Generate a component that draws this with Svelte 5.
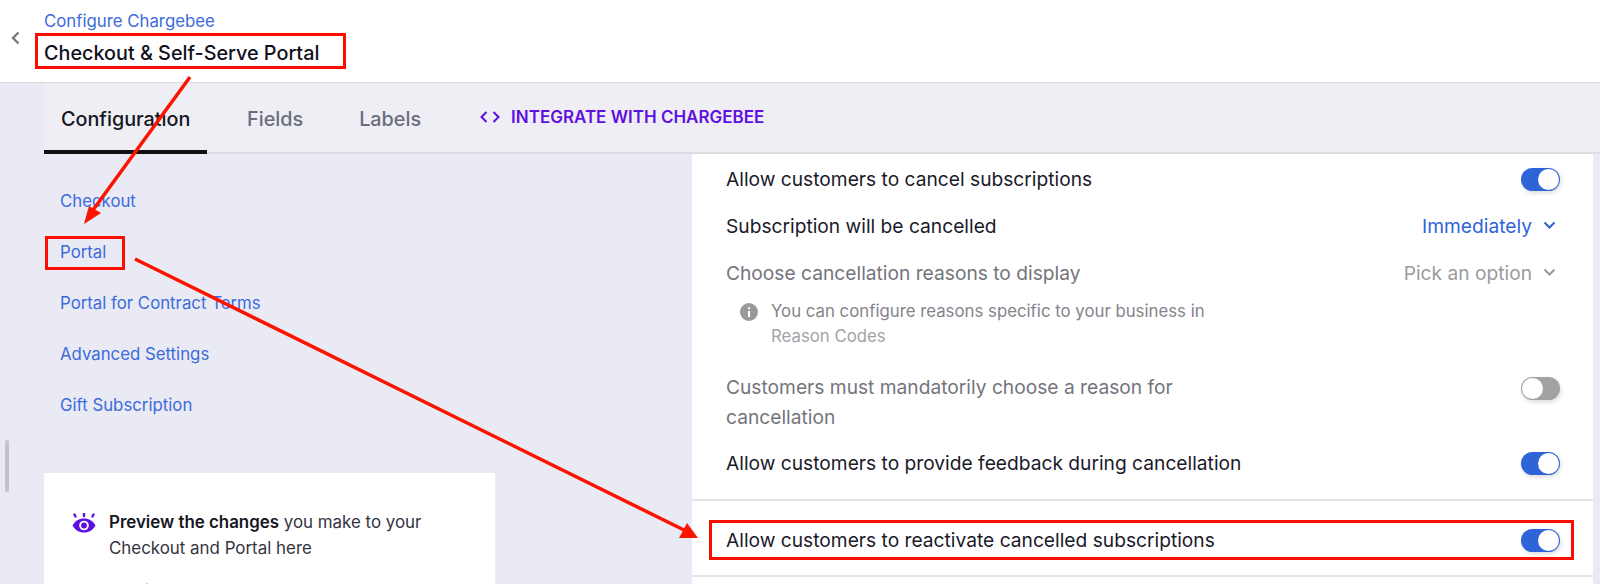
<script lang="ts">
    type Nav = { label: string };

    const links: Nav[] = [
        { label: "Checkout" },
        { label: "Portal" },
        { label: "Portal for Contract Terms" },
        { label: "Advanced Settings" },
        { label: "Gift Subscription" }
    ];
</script>

<div class="page">
    <header class="topbar">
        <button class="back" aria-label="Back">
            <svg width="12" height="16" viewBox="0 0 12 16"><path d="M9.500 2.500 4 8l5.500 5.500" fill="none" stroke="#777a84" stroke-width="2.400" /></svg>
        </button>
        <div class="titles">
            <a class="crumb" href="#top">Configure Chargebee</a>
            <h1>Checkout &amp; Self-Serve Portal</h1>
        </div>
    </header>

    <div class="body">
        <div class="rail"><span class="scroll"></span></div>
        <div class="content">
            <nav class="tabs">
                <span class="tab active">Configuration</span>
                <span class="tab">Fields</span>
                <span class="tab">Labels</span>
                <a class="integrate" href="#top">
                    <svg width="20" height="14" viewBox="0 0 20 14"><path d="M6.500 2 1.500 7l5 5M13.500 2l5 5-5 5" fill="none" stroke="#5f10e0" stroke-width="2" /></svg>
                    INTEGRATE WITH CHARGEBEE
                </a>
            </nav>

            <div class="columns">
                <aside class="side">
                    <ul>
                        {#each links as link}
                            <li><a href="#top">{link.label}</a></li>
                        {/each}
                    </ul>
                    <div class="card">
                        <svg class="eye" width="24" height="20" viewBox="0 0 24 20">
                            <path d="M12 0.500v2.500M2.500 1.500l1 2M21.500 1.500l-1 2" stroke="#5f10e0" stroke-width="2.400" stroke-linecap="round" />
                            <path d="M0.500 12.500C3 8 7 5.500 12 5.500S21 8 23.500 12.500C21 17 17 19.500 12 19.500S3 17 0.500 12.500Z" fill="#5f10e0" />
                            <circle cx="12" cy="12.500" r="4.800" fill="#fff" />
                            <circle cx="12" cy="12.500" r="2.900" fill="#5f10e0" />
                        </svg>
                        <div class="card-text">
                            <p><b>Preview the changes</b> you make to your Checkout and Portal here</p>
                            <a href="#top">Preview Checkout/Portal</a>
                        </div>
                    </div>
                </aside>

                <section class="panel">
                    <div class="group">
                        <div class="row">
                            <span>Allow customers to cancel subscriptions</span>
                            <span class="toggle on"></span>
                        </div>
                        <div class="row">
                            <span>Subscription will be cancelled</span>
                            <span class="select">Immediately
                                <svg width="13" height="9" viewBox="0 0 13 9"><path d="M1.500 1.500 6.500 6.500l5-5" fill="none" stroke="currentColor" stroke-width="2" /></svg>
                            </span>
                        </div>
                        <div class="row muted">
                            <span>Choose cancellation reasons to display</span>
                            <span class="select off">Pick an option
                                <svg width="13" height="9" viewBox="0 0 13 9"><path d="M1.500 1.500 6.500 6.500l5-5" fill="none" stroke="currentColor" stroke-width="2" /></svg>
                            </span>
                        </div>
                        <div class="hint">
                            <svg width="18" height="18" viewBox="0 0 18 18">
                                <circle cx="9" cy="9" r="9" fill="#999" />
                                <rect x="8" y="8" width="2" height="6" fill="#fff" />
                                <rect x="8" y="4.200" width="2" height="2" fill="#fff" />
                            </svg>
                            <p>You can configure reasons specific to your business in <a href="#top">Reason Codes</a></p>
                        </div>
                        <div class="row muted tall">
                            <span class="wrap">Customers must mandatorily choose a reason for cancellation</span>
                            <span class="toggle"></span>
                        </div>
                        <div class="row">
                            <span>Allow customers to provide feedback during cancellation</span>
                            <span class="toggle on"></span>
                        </div>
                    </div>
                    <div class="group second">
                        <div class="row">
                            <span>Allow customers to reactivate cancelled subscriptions</span>
                            <span class="toggle on"></span>
                        </div>
                    </div>
                </section>
            </div>
        </div>
    </div>

    <!-- annotations drawn over the screenshot -->
    <svg class="marks" width="1600" height="584" viewBox="0 0 1600 584">
        <g fill="none" stroke="#fb0d00" stroke-width="3">
            <rect x="36.500" y="34.500" width="308" height="33" />
            <rect x="46.500" y="237.500" width="77" height="31" />
            <rect x="710.500" y="521.500" width="862" height="37" />
        </g>
        <g fill="none" stroke="#fb1500" stroke-width="3.500">
            <path d="M190 77 93 210" />
            <path d="M135 259 686 531" />
        </g>
        <path d="M84 224 89 206 101 213Z" fill="#fb1500" />
        <path d="M698 538 679 538 687 523Z" fill="#fb1500" />
    </svg>
</div>

<style>
    :global(body) {
        margin: 0;
        font-family: Inter, "Liberation Sans", sans-serif;
    }

    .page {
        position: relative;
        width: 1600px;
        height: 584px;
        overflow: hidden;
        background: #e9eaf4;
    }

    a {
        color: #3c6bdc;
        text-decoration: none;
    }

    .topbar {
        height: 83px;
        box-sizing: border-box;
        background: #fff;
        border-bottom: 1px solid #d9d9de;
        display: flex;
        align-items: flex-start;
    }

    .back {
        border: 0;
        padding: 0;
        background: none;
        width: 30px;
        height: 75px;
        display: flex;
        align-items: center;
        justify-content: center;
    }

    .titles {
        padding-top: 11px;
        margin-left: 14px;
    }

    .crumb {
        display: block;
        font-size: 16.800px;
        line-height: 20px;
    }

    h1 {
        margin: 11px 0 0;
        font-size: 19.800px;
        line-height: 22px;
        font-weight: 500;
        color: #11111b;
    }

    .body {
        display: flex;
    }

    .rail {
        width: 44px;
        flex: none;
    }

    .scroll {
        display: block;
        width: 4px;
        height: 52px;
        margin: 357px 0 0 5px;
        border-radius: 2px;
        background: #c4c4c8;
    }

    .content {
        flex: 1;
    }

    .tabs {
        height: 71px;
        box-sizing: border-box;
        background: #eeeef4;
        border-bottom: 2px solid #dcdce2;
        display: flex;
        align-items: flex-start;
        color: #6a6d7c;
        font-size: 19.800px;
        font-weight: 500;
    }

    .tab {
        height: 71px;
        box-sizing: border-box;
        padding: 0 28px 0 0;
        margin-right: 28px;
        line-height: 72px;
    }

    .tab.active {
        width: 163px;
        padding: 0 0 0 17px;
        margin-right: 40px;
        border-bottom: 4px solid #111;
        color: #16161f;
    }

    .integrate {
        height: 67px;
        margin-left: 3px;
        display: flex;
        align-items: center;
        gap: 11px;
        font-size: 17px;
        font-weight: 600;
        color: #5f10e0;
    }

    .columns {
        display: flex;
        justify-content: space-between;
        padding-right: 7px;
    }

    .side {
        width: 451px;
    }

    ul {
        list-style: none;
        margin: 0;
        padding: 22px 0 0 16px;
    }

    li {
        height: 51px;
        line-height: 51px;
        font-size: 16.800px;
    }

    .card {
        margin-top: 42px;
        height: 200px;
        padding: 36px 40px 0 28px;
        background: #fff;
        display: flex;
        gap: 13px;
        font-size: 16.900px;
        line-height: 26px;
        color: #34343f;
    }

    .eye {
        flex: none;
        margin-top: 4px;
    }

    .card-text p {
        margin: 0 0 17px;
    }

    .card-text b {
        font-weight: 600;
        color: #16161f;
    }

    .panel {
        width: 901px;
        background: #fff;
        font-size: 19.200px;
        color: #1a1a2a;
    }

    .group {
        padding: 1px 33px 13px 34px;
        border-bottom: 2px solid #e4e4e8;
    }

    .group.second {
        padding-top: 15px;
        padding-bottom: 12px;
    }

    .row {
        min-height: 47px;
        display: flex;
        align-items: center;
        justify-content: space-between;
    }

    .row.muted {
        color: #74747c;
    }

    .row.tall {
        align-items: flex-start;
        line-height: 30px;
        margin: 23px 0 7px;
    }

    .wrap {
        width: 500px;
    }

    .toggle {
        position: relative;
        flex: none;
        width: 39px;
        height: 23px;
        margin-top: 2px;
        box-sizing: border-box;
        border-radius: 12px;
        background: #a2a2a2;
        box-shadow: 1px 2px 4px rgba(0, 0, 0, 0.14);
    }

    .row.tall .toggle {
        margin-top: 5px;
    }

    .toggle.on {
        background: #2f64d8;
    }

    .toggle::after {
        content: "";
        position: absolute;
        top: 1px;
        left: 1px;
        width: 21px;
        height: 21px;
        border-radius: 50%;
        background: #fff;
    }

    .toggle.on::after {
        left: 17px;
    }

    .select {
        display: flex;
        align-items: center;
        gap: 11px;
        margin-right: 4px;
        color: #2f64d8;
    }

    .select.off {
        color: #9b9b9b;
    }

    .hint {
        display: flex;
        gap: 13px;
        margin: 3px 0 0 14px;
        font-size: 16.800px;
        line-height: 25px;
        color: #84848c;
    }

    .hint svg {
        flex: none;
        margin-top: 4px;
    }

    .hint p {
        margin: 0;
        width: 460px;
    }

    .hint a {
        color: #a3a3a8;
        display: block;
    }

    .marks {
        position: absolute;
        inset: 0;
        pointer-events: none;
    }
</style>
